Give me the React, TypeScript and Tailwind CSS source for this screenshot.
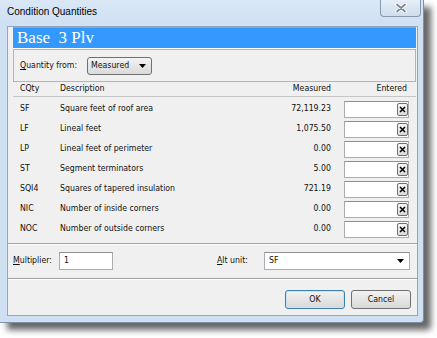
import React from 'react';

const rows = [
  { code: 'SF', desc: 'Square feet of roof area', measured: '72,119.23' },
  { code: 'LF', desc: 'Lineal feet', measured: '1,075.50' },
  { code: 'LP', desc: 'Lineal feet of perimeter', measured: '0.00' },
  { code: 'ST', desc: 'Segment terminators', measured: '5.00' },
  { code: 'SQI4', desc: 'Squares of tapered insulation', measured: '721.19' },
  { code: 'NIC', desc: 'Number of inside corners', measured: '0.00' },
  { code: 'NOC', desc: 'Number of outside corners', measured: '0.00' },
];

const DownArrow = () => (
  <svg width="7" height="4" viewBox="0 0 7 4">
    <path d="M0 0H7L3.5 4Z" fill="#000" />
  </svg>
);

const ClearButton = () => (
  <div className="w-[11px] h-[13px] rounded-[2px] border border-[#707070] bg-gradient-to-b from-[#f7f7f7] to-[#d9d9d9] flex items-center justify-center">
    <svg width="7" height="7" viewBox="0 0 7 7">
      <path d="M1 1L6 6M6 1L1 6" stroke="#000" strokeWidth="1.5" />
    </svg>
  </div>
);

export default function App() {
  return (
    <div className="w-[437px] h-[338px] bg-white font-['DejaVu_Sans_Condensed','Liberation_Sans',Arial,sans-serif] text-[8.7px] text-[#111]">
      <div className="w-[424px] h-[323px] flex flex-col bg-[#cfe0f3] border-r border-b border-[#7d8ea6] rounded-br-[4px] shadow-[7px_7px_6px_rgba(0,0,0,0.6)]">
        {/* title bar */}
        <div className="h-[26px] shrink-0 flex items-start bg-gradient-to-b from-[#d9e7f6] to-[#cfe0f3]">
          <span className="mt-[6px] ml-[7px] font-['Liberation_Sans',Arial,sans-serif] text-[10px] leading-[12px] text-black">Condition Quantities</span>
          <div className="ml-auto mr-[2px] w-[41px] h-[17px] rounded-b-[4px] border border-t-0 border-[#8898ae] bg-gradient-to-b from-[#e6eef8] to-[#cedded] flex items-center justify-center">
            <svg width="12" height="10" viewBox="0 0 12 10">
              <path d="M2 1.5L10 8.5M10 1.5L2 8.5" stroke="#ffffff" strokeWidth="3.6" strokeLinecap="round" />
              <path d="M2 1.5L10 8.5M10 1.5L2 8.5" stroke="#80858e" strokeWidth="1.7" strokeLinecap="round" />
            </svg>
          </div>
        </div>

        {/* client area */}
        <div className="ml-[7px] w-[411px] h-[290px] border border-[#93a6bd] bg-[#f0f0f0] flex flex-col">
          {/* condition name bar */}
          <div className="ml-[5px] w-[403px] h-[22px] border-t border-[#a0a0a0] border-b border-b-white">
            <div className="h-[20px] bg-[#3399ff] pl-[4px] flex items-center font-['Liberation_Serif',serif] text-[17px] leading-[20px] text-white whitespace-pre">
              Base  3 Plv
            </div>
          </div>

          {/* quantity from */}
          <div className="ml-[5px] w-[403px] h-[33px] border border-[#b4b4b4] flex items-center pl-[6px]">
            <span className="w-[67px]">
              <u className="underline-offset-1">Q</u>uantity from:
            </span>
            <div className="w-[65px] h-[18px] rounded-[3px] border border-[#707070] bg-gradient-to-b from-[#f3f3f3] to-[#dadada] flex items-center pl-[3px] pr-[5px]">
              <span className="flex-1">Measured</span>
              <DownArrow />
            </div>
          </div>

          {/* header */}
          <div className="ml-[5px] w-[403px] h-[15px] px-[7px] grid grid-cols-[40px_1fr_100px_78px] items-center border-b border-[#c6c6c6]">
            <span>CQty</span>
            <span>Description</span>
            <span className="text-right">Measured</span>
            <span className="text-right pr-[2px]">Entered</span>
          </div>

          {/* rows */}
          <div className="mt-[2px] ml-[5px] w-[403px] px-[7px] flex flex-col">
            {rows.map((r) => (
              <div key={r.code} className="h-[20px] grid grid-cols-[40px_1fr_100px_78px] items-center">
                <span>{r.code}</span>
                <span>{r.desc}</span>
                <span className="text-right">{r.measured}</span>
                <div className="justify-self-end w-[65px] h-[17px] border border-[#abadb3] border-t-[#8e8f8f] bg-white flex items-center justify-end">
                  <ClearButton />
                </div>
              </div>
            ))}
          </div>

          <div className="mt-[4px] h-[2px] border-t border-[#a0a0a0] border-b border-b-white" />

          {/* multiplier / alt unit */}
          <div className="mt-[7px] h-[18px] pl-[5px] flex items-center">
            <span className="w-[46px]">
              <u className="underline-offset-1">M</u>ultiplier:
            </span>
            <div className="w-[54px] h-[18px] border border-[#abadb3] border-t-[#8e8f8f] bg-white pl-[4px] flex items-center">1</div>
            <span className="ml-[104px] w-[47px]">
              <u className="underline-offset-1">A</u>lt unit:
            </span>
            <div className="w-[146px] h-[18px] border border-[#abadb3] border-t-[#8e8f8f] bg-white pl-[4px] pr-[5px] flex items-center">
              <span className="flex-1">SF</span>
              <DownArrow />
            </div>
          </div>

          <div className="mt-[8px] h-[2px] border-t border-[#a0a0a0] border-b border-b-white" />

          {/* buttons */}
          <div className="mt-[10px] pr-[6px] flex justify-end gap-[6px]">
            <button className="w-[60px] h-[19px] rounded-[3px] border border-[#3c7fb1] bg-gradient-to-b from-[#f2f2f2] to-[#d8d8d8] shadow-[inset_0_0_0_1px_#c4e5f8] text-[#111]">
              OK
            </button>
            <button className="w-[60px] h-[19px] rounded-[3px] border border-[#707070] bg-gradient-to-b from-[#f2f2f2] to-[#d8d8d8] text-[#111]">
              Cancel
            </button>
          </div>
        </div>
      </div>
    </div>
  );
}
